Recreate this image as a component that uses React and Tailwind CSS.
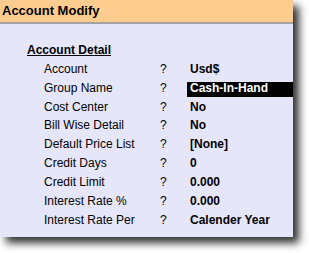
import React from 'react'

const rows = [
  { label: 'Account', value: 'Usd$' },
  { label: 'Group Name', value: 'Cash-In-Hand', active: true },
  { label: 'Cost Center', value: 'No' },
  { label: 'Bill Wise Detail', value: 'No' },
  { label: 'Default Price List', value: '[None]' },
  { label: 'Credit Days', value: '0' },
  { label: 'Credit Limit', value: '0.000' },
  { label: 'Interest Rate %', value: '0.000' },
  { label: 'Interest Rate Per', value: 'Calender Year' }
]

export default function App() {
  return (
    <div className="w-[309px] h-[253px] bg-white font-['Liberation_Sans',Arial,sans-serif] text-black">
      <div className="w-[293px] h-[237px] bg-[#e6e6fa] shadow-[6px_6px_8px_rgba(0,0,0,0.8)] flex flex-col">
        {/* Title bar */}
        <div className="h-[24px] bg-[#ffcc90] border-b-2 border-[#a4a4a4] pl-[2px] text-[13px] font-bold leading-[22px]">
          Account Modify
        </div>

        {/* Detail */}
        <div className="pt-[19px]">
          <div className="pl-[27px] text-[12px] font-bold underline leading-[14px]">Account Detail</div>
          <div className="mt-[4px] flex flex-col">
            {rows.map(r => (
              <div key={r.label} className="grid grid-cols-[116px_27px_1fr] h-[18.85px] items-center pl-[44px] text-[12px] leading-[12px]">
                <span className="h-[15px]">{r.label}</span>
                <span className="h-[15px]">?</span>
                <span className={`h-[15px] pl-[3px] font-bold ${r.active ? 'bg-black text-white' : ''}`}>{r.value}</span>
              </div>
            ))}
          </div>
        </div>
      </div>
    </div>
  )
}
